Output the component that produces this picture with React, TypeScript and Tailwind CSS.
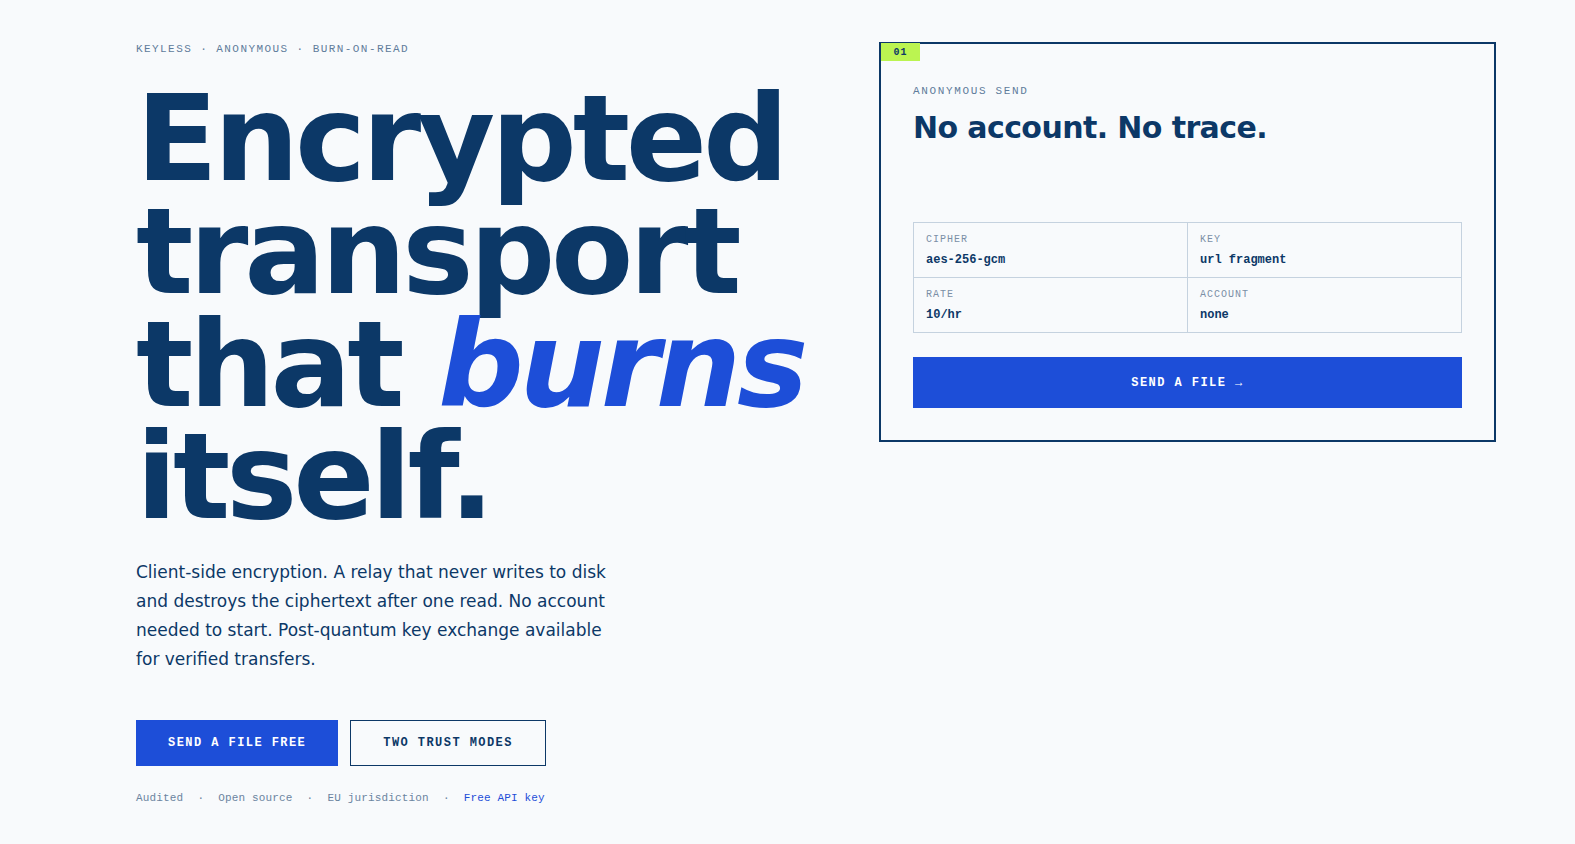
import React from "react";

const NAVY = "text-[#0c3867]";

function Spec({ label, value }: { label: string; value: string }) {
  return (
    <div className="border-r border-b border-[#c5d2df] px-3 pt-[9px] pb-2">
      <div className="text-[10px] leading-4 tracking-[0.1em] text-[#7b8fa6]">{label}</div>
      <div className={`mt-[3px] text-[12px] leading-[18px] font-bold ${NAVY}`}>{value}</div>
    </div>
  );
}

export default function App() {
  const mono = { fontFamily: '"Liberation Mono", "DejaVu Sans Mono", monospace' };
  const sans = { fontFamily: '"DejaVu Sans", "Noto Sans", sans-serif' };

  return (
    <div className="min-h-[844px] w-full bg-[#f8fafc]">
      <div className="flex items-start pl-[136px] pr-[79px] pt-[42px]">
        {/* Left: hero copy */}
        <div className="flex-1 min-w-0">
          <div
            style={mono}
            className="text-[11px] leading-[15px] tracking-[0.13em] text-[#5f7c9b] mb-[26px]"
          >
            KEYLESS · ANONYMOUS · BURN-ON-READ
          </div>
          <h1
            style={sans}
            className={`text-[120px] leading-[0.94] font-bold tracking-[-0.035em] ${NAVY}`}
          >
            Encrypted
            <br />
            transport
            <br />
            that <em className="italic text-[#1d4ed8]">burns</em>
            <br />
            itself.
          </h1>
          <p
            style={sans}
            className={`mt-6 max-w-[480px] text-[17px] leading-[1.7] ${NAVY}`}
          >
            Client-side encryption. A relay that never writes to disk and destroys the
            ciphertext after one read. No account needed to start. Post-quantum key
            exchange available for verified transfers.
          </p>
          <div style={mono} className="mt-[46px] flex gap-3">
            <button className="h-[46px] bg-[#1d4ed8] px-8 text-[12px] font-bold tracking-[0.12em] text-white">
              SEND A FILE FREE
            </button>
            <button
              className={`h-[46px] border border-[#0c3867] px-8 text-[12px] font-bold tracking-[0.12em] ${NAVY}`}
            >
              TWO TRUST MODES
            </button>
          </div>
          <div
            style={mono}
            className="mt-6 flex items-center gap-[14px] text-[11px] leading-4 tracking-[0.015em] text-[#6b84a0]"
          >
            <span>Audited</span>
            <span>·</span>
            <span>Open source</span>
            <span>·</span>
            <span>EU jurisdiction</span>
            <span>·</span>
            <span className="text-[#1d4ed8]">Free API key</span>
          </div>
        </div>

        {/* Right: send card */}
        <div className="relative w-[617px] shrink-0 border-2 border-[#0c3867] px-8 pt-[39px] pb-8">
          <div
            style={mono}
            className={`absolute -top-px left-0 flex h-[18px] w-[39px] items-center justify-center bg-[#bbf451] text-[10px] font-bold tracking-[0.1em] ${NAVY}`}
          >
            01
          </div>
          <div
            style={mono}
            className="text-[11px] leading-4 tracking-[0.15em] text-[#5f7c9b]"
          >
            ANONYMOUS SEND
          </div>
          <h2
            style={sans}
            className={`mt-[11px] mb-[76px] text-[30px] leading-9 font-bold tracking-[-0.02em] ${NAVY}`}
          >
            No account. No trace.
          </h2>
          <div style={mono} className="grid grid-cols-2 border-l border-t border-[#c5d2df]">
            <Spec label="CIPHER" value="aes-256-gcm" />
            <Spec label="KEY" value="url fragment" />
            <Spec label="RATE" value="10/hr" />
            <Spec label="ACCOUNT" value="none" />
          </div>
          <button
            style={mono}
            className="mt-6 flex h-[51px] w-full items-center justify-center bg-[#1d4ed8] text-[12px] font-bold tracking-[0.12em] text-white"
          >
            SEND A FILE →
          </button>
        </div>
      </div>
    </div>
  );
}
